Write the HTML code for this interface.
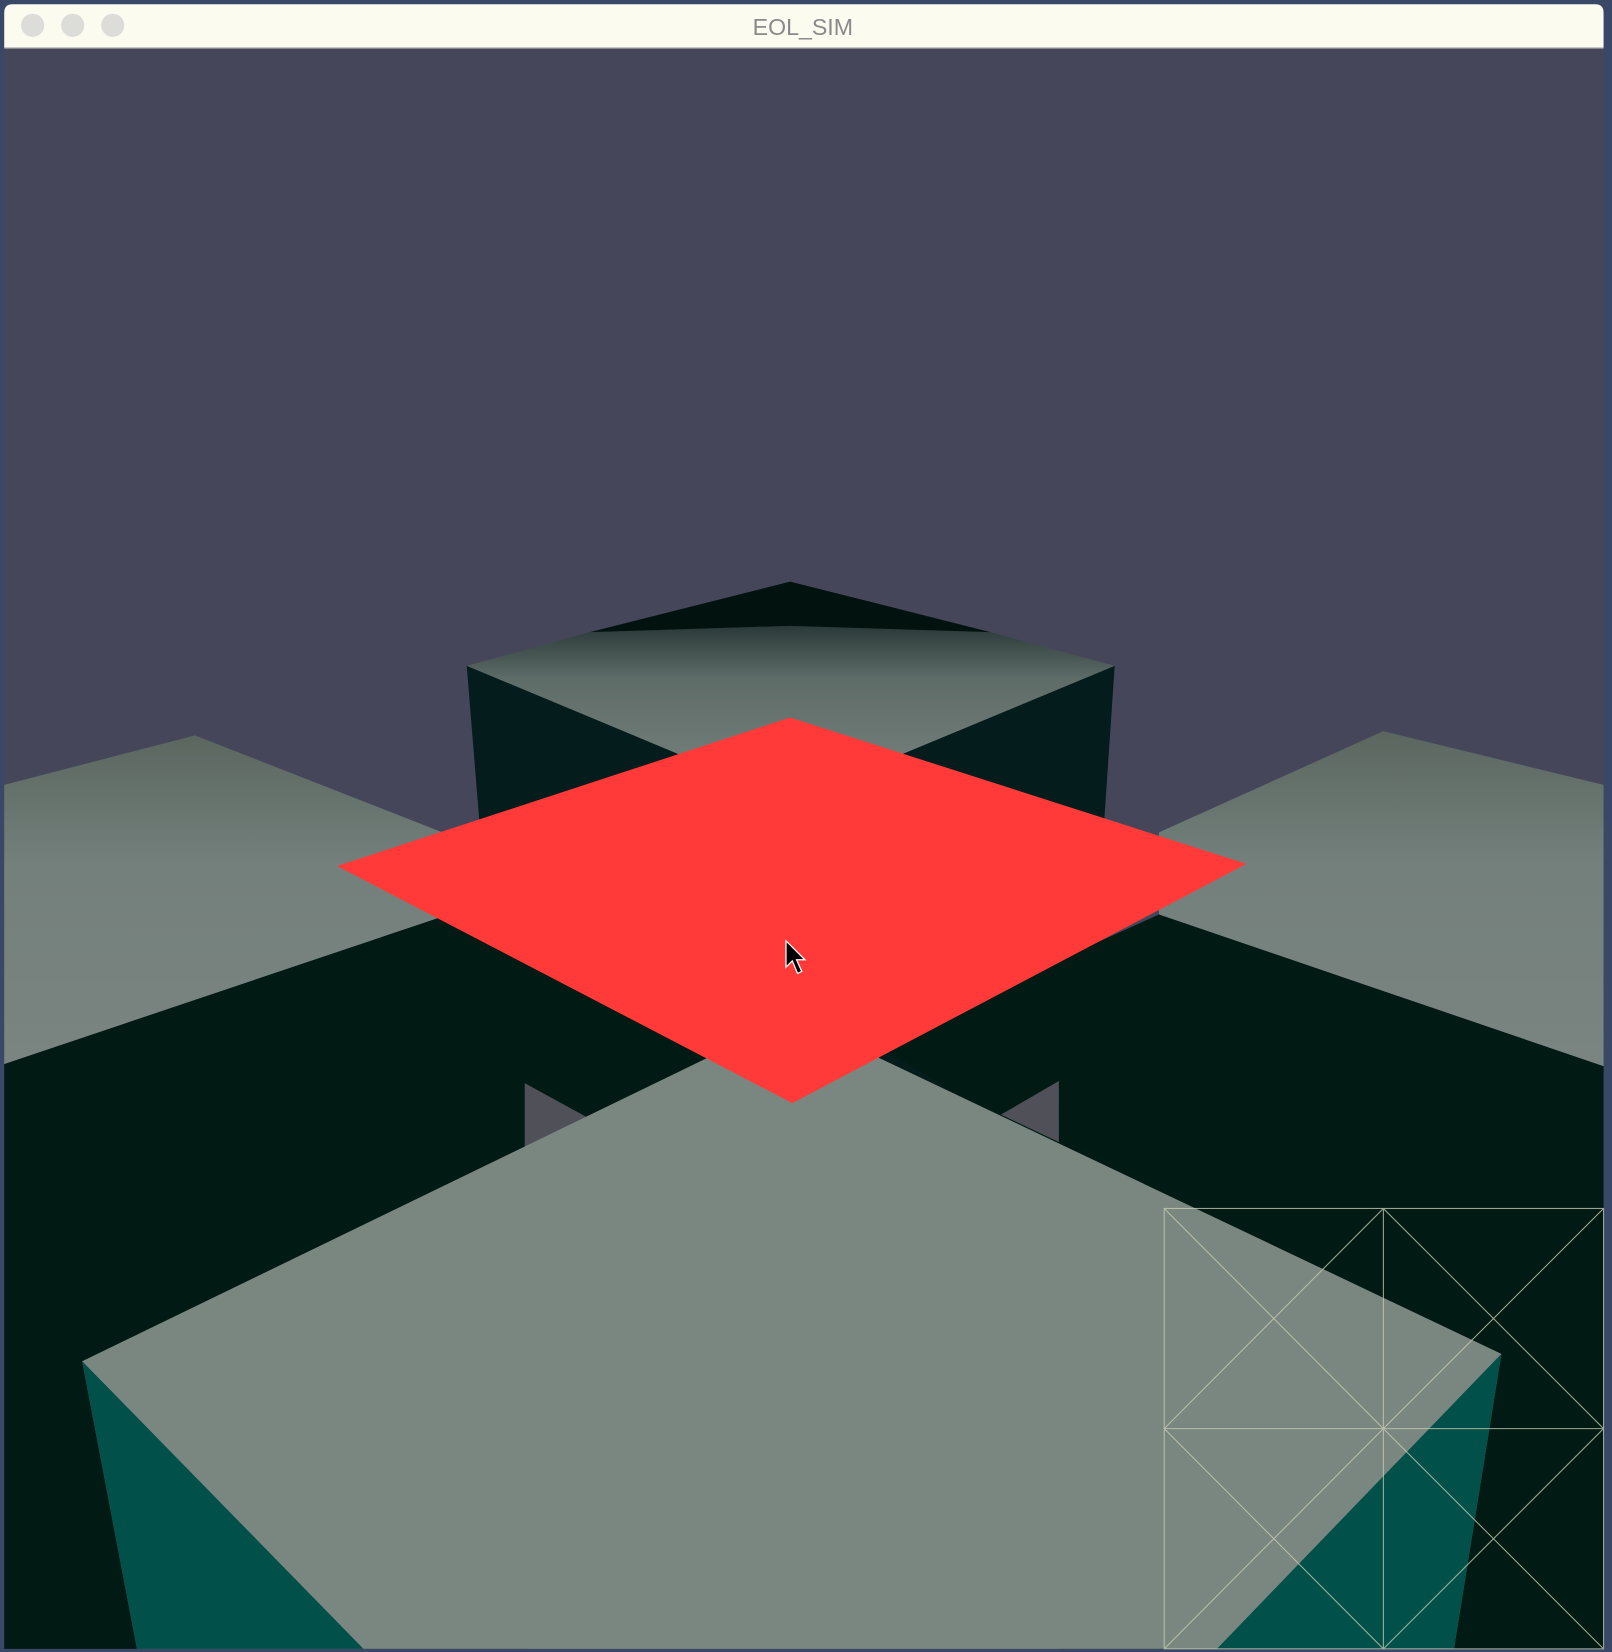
<!DOCTYPE html>
<html><head><meta charset="utf-8"><style>
html,body{margin:0;padding:0;background:#3c4a6a;width:1612px;height:1652px;overflow:hidden}
svg{display:block}
</style></head><body>
<svg width="1612" height="1652" viewBox="0 0 1530 1568" preserveAspectRatio="none" xmlns="http://www.w3.org/2000/svg">
<defs>
<linearGradient id="bt" x1="0" y1="0" x2="0" y2="1"><stop offset="0" stop-color="#2a3838"/><stop offset="0.3" stop-color="#5e6c68"/><stop offset="1" stop-color="#7a8480"/></linearGradient>
<linearGradient id="lt" x1="0" y1="0" x2="0" y2="1"><stop offset="0" stop-color="#5a665e"/><stop offset="0.4" stop-color="#74807c"/><stop offset="1" stop-color="#7a8480"/></linearGradient>
</defs>
<rect x="0" y="0" width="1530" height="1568" fill="#3a4868"/>
<rect x="4" y="45" width="1518" height="1520" fill="#46465a"/>
<polygon points="443,632 1058,632 1048,780 1005,1030 1005,1060 500,1060 455,780" fill="#041c1c"/>
<polygon points="560,600 750,594 940,600 1058,632 750,760 443,632" fill="url(#bt)"/>
<polygon points="560,600 750,552 940,600 750,594" fill="#02120e"/>
<polygon points="4,745 185,698 420,790 420,870 4,1010" fill="url(#lt)"/>
<polygon points="4,1010 420,870 700,990 500,1100 500,1565 4,1565" fill="#021a14"/>
<polygon points="1522,745 1313,694 1100,790 1100,868 1522,1012" fill="url(#lt)"/>
<polygon points="1522,1012 1100,868 830,990 1005,1100 1005,1565 1522,1565" fill="#021a14"/>
<polygon points="498,1028 560,1062 498,1092" fill="#505058"/>
<polygon points="1005,1026 950,1058 1005,1084" fill="#505058"/>
<polygon points="78,1292 752,965 1425,1285 1380,1565 130,1565" fill="#7a8680"/>
<polygon points="78,1292 345,1565 130,1565" fill="#02504a"/>
<polygon points="1425,1285 1155,1565 1380,1565" fill="#02504a"/>
<polygon points="750,681 1183,820 752,1047 320,822" fill="#ff3a38"/>
<polygon points="746,893 746,918 752,912 757,924 761,922 756,911 764,911" fill="#000" stroke="#fff" stroke-width="1.2"/>
<g stroke="#c8ccb0" stroke-width="1" fill="none" opacity="0.8">
<rect x="1105" y="1147" width="417" height="418"/>
<line x1="1313" y1="1147" x2="1313" y2="1565"/>
<line x1="1105" y1="1356" x2="1522" y2="1356"/>
<line x1="1105" y1="1147" x2="1313" y2="1356"/><line x1="1313" y1="1147" x2="1105" y2="1356"/>
<line x1="1313" y1="1147" x2="1522" y2="1356"/><line x1="1522" y1="1147" x2="1313" y2="1356"/>
<line x1="1105" y1="1356" x2="1313" y2="1565"/><line x1="1313" y1="1356" x2="1105" y2="1565"/>
<line x1="1313" y1="1356" x2="1522" y2="1565"/><line x1="1522" y1="1356" x2="1313" y2="1565"/>
</g>
<path d="M4,45 L4,12 Q4,4 12,4 L1514,4 Q1522,4 1522,12 L1522,45 Z" fill="#fbfbf0"/>
<line x1="4" y1="45.5" x2="1522" y2="45.5" stroke="#c8c8c0"/>
<circle cx="31" cy="24" r="11" fill="#dcdcd8"/>
<circle cx="69" cy="24" r="11" fill="#dcdcd8"/>
<circle cx="107" cy="24" r="11" fill="#dcdcd8"/>
<text x="762" y="33" text-anchor="middle" font-family="Liberation Sans, sans-serif" font-size="22" fill="#8a8a8a">EOL_SIM</text>
</svg>
</body></html>
